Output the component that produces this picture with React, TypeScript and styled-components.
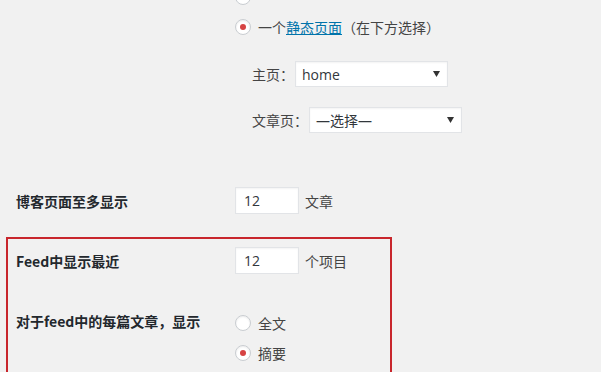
import React from "react";
import styled, { createGlobalStyle } from "styled-components";

const GlobalStyle = createGlobalStyle`
  html, body {
    margin: 0;
    padding: 0;
    background: #f1f1f1;
    overflow: hidden;
  }
  body {
    font-family: "Noto Sans CJK SC", "Open Sans", sans-serif;
    font-size: 14px;
    color: #32373c;
  }
`;

const Page = styled.div`
  width: 601px;
  height: 372px;
  overflow: hidden;
  padding-left: 6px;
  box-sizing: border-box;
`;

const Scroller = styled.div`
  margin-top: -18px;
  display: flex;
  flex-direction: column;
`;

const Row = styled.div<{ $top?: number; $align?: string }>`
  display: grid;
  grid-template-columns: 219px 1fr;
  align-items: ${(p) => p.$align || "center"};
  margin-top: ${(p) => p.$top || 0}px;
  padding-left: 10px;
`;

const Highlight = styled.div`
  margin-top: 23px;
  width: 386px;
  box-sizing: border-box;
  border: 2px solid #c8262c;
  border-bottom: none;
  padding: 8px 0 40px 0;
  & > ${Row} {
    padding-left: 8px;
  }
`;

const Label = styled.div<{ $lh?: number }>`
  font-weight: 700;
  color: #23282d;
  line-height: ${(p) => p.$lh || 20}px;
  white-space: nowrap;
`;

const Field = styled.div`
  display: flex;
  flex-direction: column;
`;

const RadioRow = styled.label`
  display: flex;
  align-items: center;
  height: 30px;
  gap: 7px;
  color: #444;
  white-space: nowrap;
`;

const Radio = styled.span<{ $checked?: boolean }>`
  width: 16px;
  height: 16px;
  box-sizing: border-box;
  border-radius: 50%;
  border: 1px solid #c9cdd1;
  background: #fff;
  box-shadow: inset 0 1px 2px rgba(0, 0, 0, 0.08);
  display: flex;
  align-items: center;
  justify-content: center;
  flex: none;
  &::after {
    content: "";
    display: ${(p) => (p.$checked ? "block" : "none")};
    width: 6px;
    height: 6px;
    border-radius: 50%;
    background: #d64343;
  }
`;

const Link = styled.a`
  color: #0073aa;
  text-decoration: underline;
`;

const SubList = styled.div`
  display: flex;
  flex-direction: column;
  gap: 20px;
  padding-left: 17px;
  margin-top: 19px;
`;

const SubRow = styled.div`
  display: flex;
  align-items: center;
  gap: 1px;
  color: #444;
`;

const SelectBox = styled.div`
  width: 153px;
  height: 26px;
  box-sizing: border-box;
  background: #fff;
  border: 1px solid #e2e4e7;
  box-shadow: inset 0 1px 2px rgba(0, 0, 0, 0.05);
  display: flex;
  align-items: center;
  justify-content: space-between;
  padding: 0 7px 0 6px;
  font-family: "Open Sans", "Noto Sans CJK SC", sans-serif;
  font-size: 14px;
  color: #32373c;
`;

const Arrow = styled.svg`
  width: 7px;
  height: 6px;
  flex: none;
`;

const NumberWrap = styled.div`
  display: flex;
  align-items: center;
  gap: 6px;
  color: #444;
`;

const NumberInput = styled.div`
  width: 64px;
  height: 27px;
  box-sizing: border-box;
  background: #fff;
  border: 1px solid #e2e4e7;
  box-shadow: inset 0 1px 2px rgba(0, 0, 0, 0.05);
  display: flex;
  align-items: center;
  padding-left: 8px;
  font-family: "Open Sans", sans-serif;
  font-size: 14px;
  color: #32373c;
`;

const Select = ({ value }: { value: string }) => (
  <SelectBox>
    <span>{value}</span>
    <Arrow viewBox="0 0 7 6">
      <path d="M0 0 H7 L3.5 6 Z" fill="#333" />
    </Arrow>
  </SelectBox>
);

export default function App() {
  return (
    <>
      <GlobalStyle />
      <Page>
        <Scroller>
          <Row $align="start">
            <span />
            <Field>
              <RadioRow aria-label="您的最新文章">
                <Radio />
              </RadioRow>
              <RadioRow>
                <Radio $checked />
                <span>
                  一个<Link>静态页面</Link>（在下方选择）
                </span>
              </RadioRow>
              <SubList>
                <SubRow>
                  <span>主页：</span>
                  <Select value="home" />
                </SubRow>
                <SubRow>
                  <span>文章页：</span>
                  <Select value="—选择—" />
                </SubRow>
              </SubList>
            </Field>
          </Row>
          <Row $top={54}>
            <Label>博客页面至多显示</Label>
            <NumberWrap>
              <NumberInput>12</NumberInput>
              <span>文章</span>
            </NumberWrap>
          </Row>
          <Highlight>
            <Row>
              <Label>Feed中显示最近</Label>
              <NumberWrap>
                <NumberInput>12</NumberInput>
                <span>个项目</span>
              </NumberWrap>
            </Row>
            <Row $top={34} $align="start">
              <Label $lh={26}>对于feed中的每篇文章，显示</Label>
              <Field>
                <RadioRow>
                  <Radio />
                  <span>全文</span>
                </RadioRow>
                <RadioRow>
                  <Radio $checked />
                  <span>摘要</span>
                </RadioRow>
              </Field>
            </Row>
          </Highlight>
        </Scroller>
      </Page>
    </>
  );
}
